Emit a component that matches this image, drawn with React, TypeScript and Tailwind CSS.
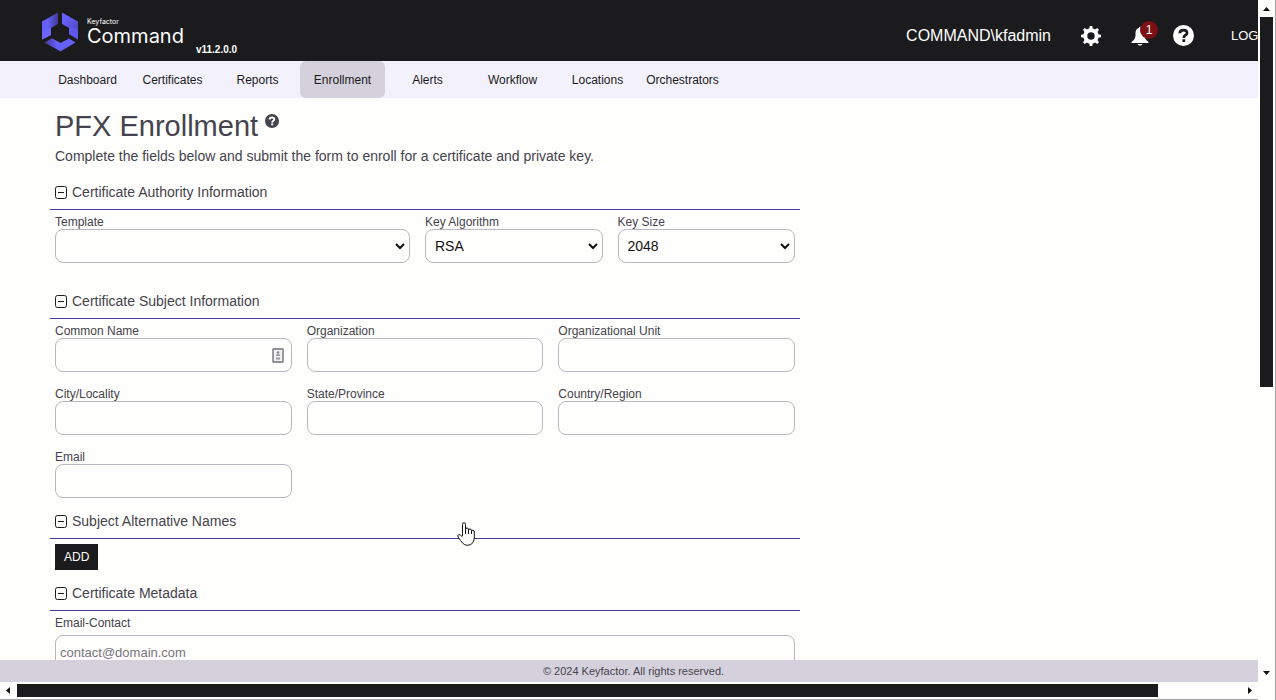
import { useId, type ReactNode } from "react";

const navItems = [
  "Dashboard",
  "Certificates",
  "Reports",
  "Enrollment",
  "Alerts",
  "Workflow",
  "Locations",
  "Orchestrators",
];

const gearAngles = [0, 45, 90, 135];

function Logo() {
  return (
    <svg viewBox="0 0 36 40" className="mt-[3px] h-10 w-9" aria-hidden="true">
      <defs>
        <linearGradient id="logo-left" x1="0" y1="0" x2="1" y2="0">
          <stop offset="0.35" stopColor="#665ff8" />
          <stop offset="1" stopColor="#403b96" />
        </linearGradient>
        <linearGradient id="logo-right" x1="0" y1="0" x2="0.6" y2="1">
          <stop offset="0.3" stopColor="#665ff8" />
          <stop offset="1" stopColor="#4a44b4" />
        </linearGradient>
        <linearGradient id="logo-bottom" x1="0" y1="0" x2="1" y2="0">
          <stop offset="0" stopColor="#403b96" />
          <stop offset="0.6" stopColor="#665ff8" />
        </linearGradient>
      </defs>
      <path d="M0 9.500 16 0.500V12L9 16V23L0 27.500Z" fill="url(#logo-left)" />
      <path d="M0 19 9 16V23L0 27.500Z" fill="#6c65fb" />
      <path d="M20 0.500 36 9.500V27.500L27 22V16L20 12Z" fill="url(#logo-right)" />
      <path d="M27 14 36 18V27.500L27 22Z" fill="#5f58ec" />
      <path d="M3 30.500 10 26.500 18.500 31 27 26.500 33.500 30.500 18.500 39.500Z" fill="#665ff8" />
      <path d="M3 30.500 10 26.500 23 33.500 18.500 36 12 35.500Z" fill="url(#logo-bottom)" />
    </svg>
  );
}

function GearIcon() {
  return (
    <svg viewBox="0 0 20 20" className="size-5" fill="none" stroke="currentColor" aria-hidden="true">
      <circle cx="10" cy="10" r="5.700" strokeWidth="4" />
      {gearAngles.map((angle) => (
        <g key={angle} transform={`rotate(${angle} 10 10)`} fill="currentColor" stroke="none">
          <path d="M8.200 3.500 8.700 0H11.300L11.800 3.500ZM8.200 16.500 8.700 20H11.300L11.800 16.500Z" />
        </g>
      ))}
    </svg>
  );
}

function BellIcon() {
  return (
    <svg viewBox="0 0 18 20" className="h-5 w-[18px]" fill="currentColor" aria-hidden="true">
      <path d="M9 0.800Q10 0.800 10.300 2 13.500 3 13.500 7V9.500Q13.500 13 17.500 16V17H0.500V16Q4.500 13 4.500 9.500V7Q4.500 3 7.700 2 8 0.800 9 0.800Z" />
      <path d="M6.500 18H11.500Q10.500 19.600 9 19.600T6.500 18Z" />
    </svg>
  );
}

function HelpIcon({ className }: { className: string }) {
  return (
    <svg viewBox="0 0 21 21" className={className} fill="none" aria-hidden="true">
      <circle cx="10.500" cy="10.500" r="10.500" fill="currentColor" />
      <g className="stroke-[#1b1b1d]" strokeWidth="2.800">
        <path d="M6.800 8.200Q6.900 5.200 10.500 5.200T14 8Q14 9.300 12.300 10.300 10.800 11.200 10.800 13" />
        <path d="M10.800 14.200V17" />
      </g>
    </svg>
  );
}

function Header() {
  return (
    <header className="flex h-[61px] shrink-0 items-center overflow-hidden bg-[#1b1b1d] pl-[42px] text-white">
      <Logo />
      <div className="ml-[9px] pt-[2px] font-[Inter,sans-serif]">
        <div className="text-[7px] leading-[9px]">Keyfactor</div>
        <div className="text-[20px] leading-[20px]">Command</div>
      </div>
      <span className="ml-3 self-end pb-[5px] text-[10px] font-bold leading-[13px]">v11.2.0.0</span>
      <div className="ml-auto flex shrink-0 items-center pt-[10px]">
        <span className="text-base">COMMAND\kfadmin</span>
        <button aria-label="Settings" className="ml-[30px]">
          <GearIcon />
        </button>
        <button aria-label="Notifications" className="relative ml-[30px]">
          <BellIcon />
          <span className="absolute -top-[5px] left-[9px] flex size-[18px] items-center justify-center rounded-full bg-[#7c1014] text-xs">
            1
          </span>
        </button>
        <button aria-label="Help" className="ml-6">
          <HelpIcon className="size-[21px]" />
        </button>
        <a href="#logout" className="ml-[37px] w-[27px] overflow-hidden text-[13px] whitespace-nowrap">
          LOGOUT
        </a>
      </div>
    </header>
  );
}

function Nav() {
  return (
    <nav className="flex h-[37px] shrink-0 bg-[#f3f1fc] pl-[45px] text-xs text-[#1b1b1d]">
      {navItems.map((item) => (
        <a
          key={item}
          href={`#${item.toLowerCase()}`}
          className={
            item === "Enrollment"
              ? "flex w-[85px] items-center justify-center rounded-md bg-[#d4d1dc]"
              : "flex w-[85px] items-center justify-center"
          }
        >
          {item}
        </a>
      ))}
    </nav>
  );
}

function Section({ title, children }: { title: string; children: ReactNode }) {
  return (
    <section>
      <h2 className="flex h-9 items-center border-b border-[#443a9c] pl-[5px] text-sm">
        <button type="button" aria-label={`Collapse ${title}`} className="mr-[5px] pt-px text-[#1b1b1d]">
          <svg viewBox="0 0 12 13" className="h-[13px] w-3" fill="none" stroke="currentColor">
            <rect x="0.5" y="0.5" width="11" height="12" rx="2" />
            <path d="M3 6.5H9" />
          </svg>
        </button>
        {title}
      </h2>
      {children}
    </section>
  );
}

function SelectField({ label, options, className }: { label: string; options: string[]; className: string }) {
  const id = useId();
  return (
    <div className={className}>
      <label htmlFor={id} className="block text-xs leading-[14px]">
        {label}
      </label>
      <div className="grid items-center">
        <select
          id={id}
          className="col-start-1 row-start-1 h-[34px] w-full appearance-none rounded-lg border border-[#b9b7c1] bg-transparent pl-[9px] text-sm text-[#111113]"
        >
          {options.map((option) => (
            <option key={option}>{option}</option>
          ))}
        </select>
        <svg
          viewBox="0 0 10 7"
          className="pointer-events-none col-start-1 row-start-1 mr-[5px] h-[7px] w-[10px] justify-self-end"
          fill="none"
          stroke="#111113"
          strokeWidth="2"
          aria-hidden="true"
        >
          <path d="M1 1 5 5 9 1" />
        </svg>
      </div>
    </div>
  );
}

function TextField({ label, contact = false }: { label: string; contact?: boolean }) {
  const id = useId();
  return (
    <div>
      <label htmlFor={id} className="block text-xs leading-[14px]">
        {label}
      </label>
      <div className="grid items-center">
        <input
          id={id}
          type="text"
          className="col-start-1 row-start-1 h-[34px] w-full rounded-lg border border-[#b9b7c1] bg-transparent px-[5px] text-sm"
        />
        {contact && (
          <svg
            viewBox="0 0 12 15"
            className="pointer-events-none col-start-1 row-start-1 mr-2 h-[15px] w-3 justify-self-end"
            aria-hidden="true"
          >
            <rect x="1" y="1" width="10" height="13" rx="0.5" fill="#f1f0f2" stroke="#928f97" strokeWidth="1.800" />
            <circle cx="6" cy="4.500" r="1.300" fill="#85838b" />
            <path d="M4 8V7Q6 5 8 7V8ZM4 9.500H8V11.500H4Z" fill="#98969e" />
          </svg>
        )}
      </div>
    </div>
  );
}

function VerticalScrollbar() {
  return (
    <div className="flex w-[18px] shrink-0 flex-col items-center border-r border-[#a3a3a5] bg-[#fefefc]" aria-hidden="true">
      <svg viewBox="0 0 17 17" className="h-[17px] w-[17px] shrink-0">
        <path d="M5 11 8.500 7 12 11Z" fill="#111113" />
      </svg>
      <div className="h-[370px] w-[13px] bg-[#1b1b1d]" />
      <svg viewBox="0 0 17 17" className="mt-auto mb-[18px] h-[17px] w-[17px] shrink-0">
        <path d="M5 6H12L8.500 10Z" fill="#111113" />
      </svg>
    </div>
  );
}

function HorizontalScrollbar() {
  return (
    <div className="flex h-[18px] shrink-0 items-center border-b border-[#a3a3a5] bg-[#fefefc]" aria-hidden="true">
      <svg viewBox="0 0 17 17" className="h-[17px] w-[17px] shrink-0">
        <path d="M10 5V12L6 8.500Z" fill="#111113" />
      </svg>
      <div className="mr-[83px] h-[13px] flex-1 bg-[#1b1b1d]" />
      <svg viewBox="0 0 17 17" className="h-[17px] w-[17px] shrink-0">
        <path d="M7 5 11 8.500 7 12Z" fill="#111113" />
      </svg>
    </div>
  );
}

function HandCursor() {
  return (
    <svg viewBox="0 0 18 24" className="absolute top-[424px] left-[457px] h-6 w-[18px]" aria-hidden="true">
      <path
        d="M5.500 14V2.500Q5.500 0.700 7 0.700T8.500 2.500V7.500Q8.500 6 10 6T11.500 7.500V8.300Q11.500 7 13 7T14.500 8.500V9.300Q14.500 8 16 8.300T17.300 10V15Q17.300 18 16 20.500 14 23.300 10.500 23.300 7.500 23.300 5.500 21 3.500 18.500 1 15Q0.200 13.300 1.500 12.700 3 12 5.500 15"
        fill="#fff"
        stroke="#111113"
      />
      <path d="M8.500 7.500V12M11.500 8V12M14.500 9V12" fill="none" stroke="#111113" />
    </svg>
  );
}

export default function App() {
  return (
    <div className="flex h-screen overflow-hidden bg-[#fefefc] font-['Liberation_Sans',Arial,sans-serif] text-[#45434d]">
      <div className="flex min-w-0 flex-1 flex-col">
        <Header />
        <Nav />
        <main className="relative min-h-0 flex-1 overflow-hidden pl-[50px]">
          <div className="pl-[5px]">
            <h1 className="flex items-start pt-[10px] text-[29px] leading-9">
              PFX Enrollment
              <button aria-label="Enrollment help" className="mt-[6px] ml-[7px]">
                <HelpIcon className="size-[14px] [&>g]:stroke-white" />
              </button>
            </h1>
            <p className="pt-[3px] text-sm leading-[18px]">
              Complete the fields below and submit the form to enroll for a certificate and private key.
            </p>
          </div>
          <form className="max-w-[750px] pt-[9px]">
            <Section title="Certificate Authority Information">
              <div className="flex gap-[15px] px-[5px] pt-[5px] pb-5">
                <SelectField label="Template" options={[""]} className="w-[355px] shrink-0" />
                <SelectField label="Key Algorithm" options={["RSA"]} className="flex-1" />
                <SelectField label="Key Size" options={["2048"]} className="flex-1" />
              </div>
            </Section>
            <Section title="Certificate Subject Information">
              <div className="grid grid-cols-3 gap-[15px] px-[5px] pt-[5px] pb-[5px]">
                <TextField label="Common Name" contact />
                <TextField label="Organization" />
                <TextField label="Organizational Unit" />
                <TextField label="City/Locality" />
                <TextField label="State/Province" />
                <TextField label="Country/Region" />
                <TextField label="Email" />
              </div>
            </Section>
            <Section title="Subject Alternative Names">
              <div className="flex px-[5px] pt-[5px] pb-[5px]">
                <button type="button" className="h-[26px] bg-[#1b1b1d] px-[9px] text-xs text-white">
                  ADD
                </button>
              </div>
            </Section>
            <Section title="Certificate Metadata">
              <div className="px-[5px] pt-[5px]">
                <label htmlFor="email-contact" className="block pb-[5px] text-xs leading-[14px]">
                  Email-Contact
                </label>
                <input
                  id="email-contact"
                  type="email"
                  placeholder="contact@domain.com"
                  className="h-[34px] w-full rounded-lg border border-[#b9b7c1] bg-transparent px-1 text-[13px] placeholder:text-[#77757d]"
                />
              </div>
            </Section>
          </form>
          <HandCursor />
        </main>
        <footer className="flex h-[22px] shrink-0 items-center justify-center bg-[#d4d1dc] pl-[9px] text-[11px]">
          © 2024 Keyfactor. All rights reserved.
        </footer>
        <HorizontalScrollbar />
      </div>
      <VerticalScrollbar />
    </div>
  );
}
